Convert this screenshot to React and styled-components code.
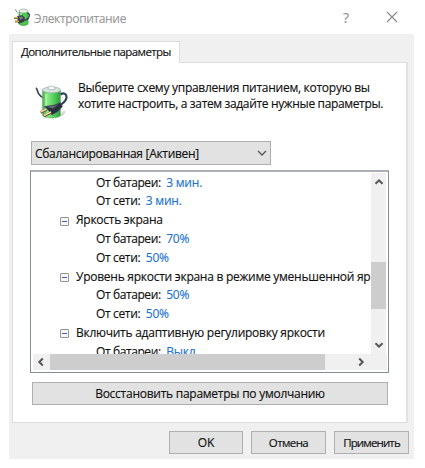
import React from "react";
import styled, { createGlobalStyle } from "styled-components";

const GlobalStyle = createGlobalStyle`
  * { box-sizing: border-box; }
  body {
    margin: 0;
    background: #fff;
    overflow: hidden;
    font: 12px "Open Sans", "Noto Sans", sans-serif;
    color: #111;
    -webkit-text-stroke: 0.15px currentColor;
  }
`;

const Dialog = styled.main`
  width: 405px;
  height: 459px;
  margin-left: 9px;
  display: flex;
  flex-direction: column;
  background: #f0f0f0;
  white-space: nowrap;
`;

const TitleBar = styled.header`
  height: 34px;
  flex: none;
  display: flex;
  align-items: center;
  padding: 0 16px 0 5px;
  background: #fff;
`;

const Title = styled.h1`
  flex: 1;
  margin: 2px 0 0 4px;
  font-size: 12px;
  font-weight: 400;
  letter-spacing: ${(p) => p.$spacing}px;
  color: #999;
`;

const HelpMark = styled.span`
  margin-right: 37px;
  font-size: 14px;
  color: #909090;
`;

const Tabs = styled.nav`
  height: 28px;
  flex: none;
  padding: 7px 0 0 3px;
`;

const Tab = styled.div`
  position: relative;
  z-index: 1;
  width: 168px;
  height: 22px;
  padding: 1px 0 0 8px;
  border: 1px solid #dcdcdc;
  border-bottom: 0;
  background: #fff;
  font-size: 11.5px;
  line-height: 17px;
  letter-spacing: ${(p) => p.$spacing}px;
`;

const Panel = styled.section`
  width: 396px;
  height: 361px;
  flex: none;
  margin-left: 3px;
  padding: 17px 0 0 17px;
  display: flex;
  flex-direction: column;
  border: 1px solid #dcdcdc;
  border-right: 2px solid #e2e2e2;
  background: #fff;
`;

const Intro = styled.div`
  display: flex;
  height: 61px;
  flex: none;
`;

const IntroIcon = styled.div`
  width: 36px;
  margin: 5px 12px 0 0;
  padding-left: 5px;
`;

const IntroText = styled.p`
  margin: 0;
  line-height: 16px;
`;

const Line = styled.span`
  display: block;
  letter-spacing: ${(p) => p.$spacing}px;
`;

const Combo = styled.div`
  width: 240px;
  height: 24px;
  flex: none;
  display: flex;
  align-items: center;
  justify-content: space-between;
  margin-left: 1px;
  padding: 0 3px;
  border: 1px solid #aeaeae;
  background: #e2e2e2;
  letter-spacing: ${(p) => p.$spacing}px;
`;

const Tree = styled.div`
  width: 359px;
  height: 203px;
  flex: none;
  margin-top: 5px;
  padding: 0 2px 2px;
  display: grid;
  grid-template-columns: 338px 16px;
  grid-template-rows: 182px 16px;
  border: 1px solid #858c96;
  border-top: 2px solid #acb0b5;
`;

const Rows = styled.div`
  padding-top: 0.7px;
  overflow: hidden;
`;

const Row = styled.div`
  height: 18.8px;
  display: flex;
  align-items: center;
  padding-left: ${(p) => (p.$child ? 63 : 27)}px;
  letter-spacing: ${(p) => p.$spacing}px;
`;

const Value = styled.span`
  margin-left: 5.5px;
  color: #1c73d1;
  letter-spacing: ${(p) => p.$spacing}px;
`;

const Collapse = styled.span`
  width: 9px;
  height: 9px;
  flex: none;
  margin: 3px 7px 0 0;
  display: grid;
  place-items: center;
  border: 1px solid #959595;
  border-radius: 1px;
  background: #f5f5f5;
  &::before {
    content: "";
    width: 5px;
    height: 1px;
    background: #4162ae;
  }
`;

const VerticalBar = styled.div`
  width: 15px;
  display: flex;
  flex-direction: column;
  align-items: center;
  margin-top: 1px;
  padding-top: 4px;
  background: #f0f0f0;
`;

const VerticalThumb = styled.div`
  width: 15px;
  height: 47px;
  flex: none;
  margin: 75px 0 31px;
  background: #cdcdcd;
`;

const HorizontalBar = styled.div`
  grid-column: 1 / -1;
  display: flex;
  align-items: center;
  padding-left: 3px;
  background: #f0f0f0;
`;

const HorizontalThumb = styled.div`
  width: 275px;
  height: 16px;
  flex: none;
  margin: 0 31px 0 4px;
  background: #cdcdcd;
`;

const Button = styled.button`
  width: ${(p) => p.$width}px;
  height: 23px;
  flex: none;
  margin: 0;
  padding: 0;
  border: 1px solid #b0b0b0;
  background: #e2e2e2;
  color: #111;
  font: ${(p) => p.$size || 12}px "Open Sans", sans-serif;
  letter-spacing: ${(p) => p.$spacing}px;
`;

const RestoreRow = styled.div`
  padding: 9px 0 0 2px;
`;

const Footer = styled.footer`
  display: flex;
  justify-content: flex-end;
  gap: 8px;
  padding: 8px 5px 0 0;
`;

function BatteryIcon() {
  return (
    <svg width="33" height="34" viewBox="0 0 33 34" aria-hidden="true">
      <defs>
        <linearGradient id="cell">
          <stop offset="0" stopColor="#3fac47" />
          <stop offset=".25" stopColor="#8eec88" />
          <stop offset=".6" stopColor="#55d35d" />
          <stop offset="1" stopColor="#2f9c3d" />
        </linearGradient>
      </defs>
      <path d="M20 33l9-7c2-1 2 3-2 5z" fill="#d5d5d5" />
      <path d="M.8 3c1.800.5 1.500 4 3 6s2.500 3 5 4" fill="none" stroke="#39465b" strokeWidth="1.700" />
      <path d="M7.500 5v25c0 4 18 4 18 0V5z" fill="url(#cell)" stroke="#69a96c" strokeWidth=".5" />
      <ellipse cx="16.500" cy="5" rx="9" ry="3" fill="#d8e3df" stroke="#93a69a" strokeWidth=".7" />
      <path d="M13 3c0-2.500 7-2.500 7 0v1c-1 1-6 1-7 0z" fill="#f3f8f7" stroke="#92a5a3" strokeWidth=".6" />
      <path d="M11 9v15" stroke="#c5f8be" strokeWidth="2" opacity=".6" />
      <path d="M25.500 9.500c3-2 6-1 6 2.500 0 5-4 6-7 8.500" fill="none" stroke="#34415a" strokeWidth="2.200" />
      <path d="m9 21.500 10-1.500 6.500-2.500 2 4-4.500 5-6 3.500-3-4z" fill="#28303e" stroke="#566073" strokeWidth=".6" />
      <path d="m11 21.700 9-1.200 4-1.500-6 4.500z" fill="#626975" />
      <path d="m5.500 27.500 6-3M9 31l7-3.500" stroke="#6b5034" strokeWidth="2.800" />
      <path d="m5.500 27 6-3M9 30.500l7-3.500" stroke="#f1d7a0" strokeWidth="1.500" />
    </svg>
  );
}

function SmallBatteryIcon() {
  return (
    <svg width="16" height="18" viewBox="0 0 16 18" aria-hidden="true">
      <path d="M5 3.500v12c0 2.500 9 2.500 9 0v-12z" fill="#48cd4c" stroke="#398b42" strokeWidth=".7" />
      <ellipse cx="9.500" cy="3" rx="4.500" ry="2" fill="#e5ede7" stroke="#889b8d" strokeWidth=".6" />
      <path d="M7 5v3" stroke="#b7f4af" strokeWidth="1.500" />
      <path d="M1 1.500c1 0 1 2 2.500 3" fill="none" stroke="#777f88" />
      <path d="M13.500 5c3 1 2 5-1 6.500L9 13" fill="none" stroke="#384257" strokeWidth="1.400" />
      <path d="M3 8.500 8 7l3 3-1.500 4-5 1.500z" fill="#343941" stroke="#5c626a" strokeWidth=".5" />
      <path d="m5 9 3-.7 1.500 2.200L6 12z" fill="#767b82" />
      <path d="M0 10h4M1 13.500h4" stroke="#7b602c" strokeWidth="2" />
      <path d="M0 9.700h4M1 13.200h4" stroke="#e8c558" />
    </svg>
  );
}

function Chevron({ direction, thin }) {
  const angle = { up: 0, right: 90, down: 180, left: 270 }[direction];
  return (
    <svg width="10" height="10" viewBox="0 0 10 10" aria-hidden="true">
      <path d={thin ? "m1 7 4-4 4 4" : "M1.5 6.8 5 3.3l3.5 3.5"} transform={`rotate(${angle} 5 5)`} fill="none" stroke="#555" strokeWidth={thin ? 1.3 : 2} />
    </svg>
  );
}

const settings = [
  { label: "От батареи:", value: "3 мин.", spacing: -0.4 },
  { label: "От сети:", value: "3 мин.", spacing: -0.35 },
  { label: "Яркость экрана", spacing: -0.26 },
  { label: "От батареи:", value: "70%", spacing: -0.4 },
  { label: "От сети:", value: "50%", spacing: -0.35 },
  { label: "Уровень яркости экрана в режиме уменьшенной яр", spacing: -0.26 },
  { label: "От батареи:", value: "50%", spacing: -0.4 },
  { label: "От сети:", value: "50%", spacing: -0.35 },
  { label: "Включить адаптивную регулировку яркости", spacing: -0.26 },
  { label: "От батареи:", value: "Выкл.", spacing: -0.4 },
];

export default function App() {
  return (
    <>
      <GlobalStyle />
      <Dialog>
        <TitleBar>
          <SmallBatteryIcon />
          <Title $spacing={-0.35}>Электропитание</Title>
          <HelpMark>?</HelpMark>
          <svg width="12" height="12" viewBox="0 0 12 12" aria-label="Закрыть">
            <path d="m1 1 10 10M11 1 1 11" stroke="#888" strokeWidth="1.1" />
          </svg>
        </TitleBar>
        <Tabs><Tab $spacing={-0.59}>Дополнительные параметры</Tab></Tabs>
        <Panel>
          <Intro>
            <IntroIcon><BatteryIcon /></IntroIcon>
            <IntroText>
              <Line $spacing={-0.27}>Выберите схему управления питанием, которую вы</Line>
              <Line $spacing={-0.35}>хотите настроить, а затем задайте нужные параметры.</Line>
            </IntroText>
          </Intro>
          <Combo $spacing={-0.3}>Сбалансированная [Активен]<Chevron direction="down" thin /></Combo>
          <Tree>
            <Rows>
              {settings.map(({ label, value, spacing }, i) => (
                <Row key={i} $child={!!value} $spacing={spacing}>
                  {!value && <Collapse />}
                  {label}
                  {value && <Value $spacing={-0.2}>{value}</Value>}
                </Row>
              ))}
            </Rows>
            <VerticalBar>
              <Chevron direction="up" />
              <VerticalThumb />
              <Chevron direction="down" />
            </VerticalBar>
            <HorizontalBar>
              <Chevron direction="left" />
              <HorizontalThumb />
              <Chevron direction="right" />
            </HorizontalBar>
          </Tree>
          <RestoreRow><Button $width={356} $spacing={-0.26}>Восстановить параметры по умолчанию</Button></RestoreRow>
        </Panel>
        <Footer>
          <Button $width={74} $spacing={0}>OK</Button>
          <Button $width={75} $size={11.5} $spacing={-0.6}>Отмена</Button>
          <Button $width={75} $size={11.5} $spacing={-0.85}>Применить</Button>
        </Footer>
      </Dialog>
    </>
  );
}
